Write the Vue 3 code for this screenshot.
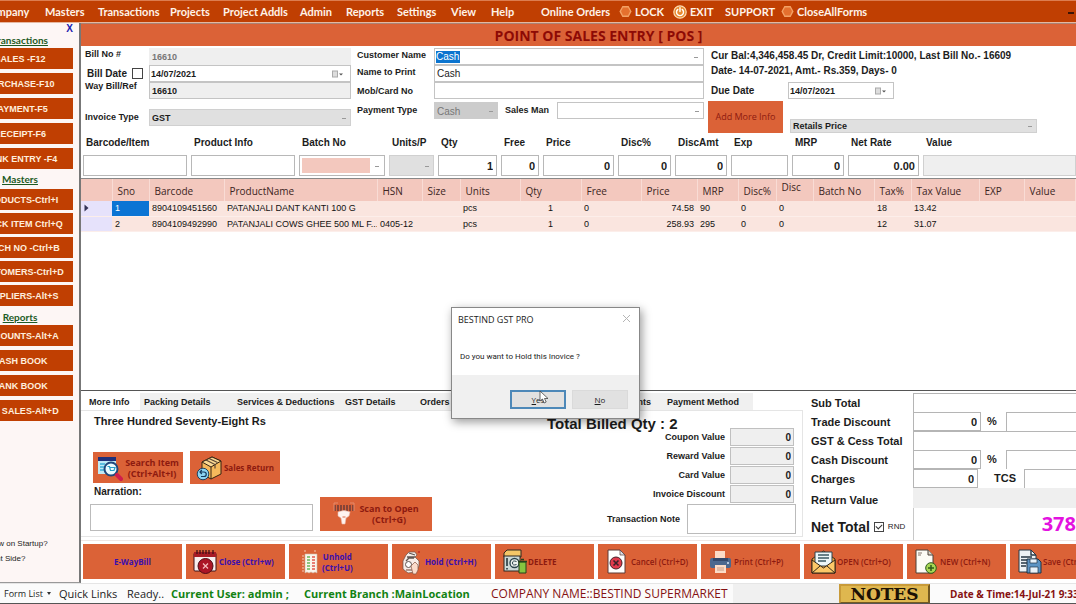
<script setup>
import { ref } from 'vue'

const menu = [
  { label: 'Company', w: 62 },
  { label: 'Masters', w: 53 },
  { label: 'Transactions', w: 72 },
  { label: 'Projects', w: 53 },
  { label: 'Project Addls', w: 77 },
  { label: 'Admin', w: 46 },
  { label: 'Reports', w: 51 },
  { label: 'Settings', w: 54 },
  { label: 'View', w: 40 },
  { label: 'Help', w: 50 },
  { label: 'Online Orders', w: 78 },
  { label: 'LOCK', w: 54, icon: 'hex' },
  { label: 'EXIT', w: 52, icon: 'power' },
  { label: 'SUPPORT', w: 56 },
  { label: 'CloseAllForms', w: 100, icon: 'hex' },
]

const sideGroups = [
  { key: 'tx', title: 'Transactions', items: ['SALES -F12', 'PURCHASE-F10', 'PAYMENT-F5', 'RECEIPT-F6', 'BANK ENTRY -F4'] },
  { key: 'ms', title: 'Masters', items: ['PRODUCTS-Ctrl+I', 'STOCK ITEM Ctrl+Q', 'BATCH NO -Ctrl+B', 'CUSTOMERS-Ctrl+D', 'SUPPLIERS-Alt+S'] },
  { key: 'rp', title: 'Reports', items: ['ACCOUNTS-Alt+A', 'CASH BOOK', 'BANK BOOK', 'DAY SALES-Alt+D'] },
]

const entry = [
  { label: 'Barcode/Item', value: '' },
  { label: 'Product Info', value: '' },
  { label: 'Batch No', kind: 'batch' },
  { label: 'Units/P', kind: 'select' },
  { label: 'Qty', value: '1' },
  { label: 'Free', value: '0' },
  { label: 'Price', value: '0' },
  { label: 'Disc%', value: '0' },
  { label: 'DiscAmt', value: '0' },
  { label: 'Exp', value: '' },
  { label: 'MRP', value: '0' },
  { label: 'Net Rate', value: '0.00' },
  { label: 'Value', value: '', kind: 'readonly' },
]

const columns = [
  { label: '', key: 'mark', w: 31 },
  { label: 'Sno', key: 'sno', w: 37 },
  { label: 'Barcode', key: 'barcode', w: 75 },
  { label: 'ProductName', key: 'name', w: 153 },
  { label: 'HSN', key: 'hsn', w: 45 },
  { label: 'Size', key: 'size', w: 38 },
  { label: 'Units', key: 'units', w: 60 },
  { label: 'Qty', key: 'qty', w: 61 },
  { label: 'Free', key: 'free', w: 60 },
  { label: 'Price', key: 'price', w: 56 },
  { label: 'MRP', key: 'mrp', w: 41 },
  { label: 'Disc%', key: 'disc', w: 38 },
  { label: 'Disc', key: 'discAmt', w: 37 },
  { label: 'Batch No', key: 'batch', w: 61 },
  { label: 'Tax%', key: 'tax', w: 37 },
  { label: 'Tax Value', key: 'taxValue', w: 68 },
  { label: 'EXP', key: 'exp', w: 45 },
  { label: 'Value', key: 'value' },
]
const rows = [
  { sno: '1', barcode: '8904109451560', name: 'PATANJALI DANT KANTI 100 G', units: 'pcs', qty: '1', free: '0', price: '74.58', mrp: '90', disc: '0', discAmt: '0', tax: '18', taxValue: '13.42' },
  { sno: '2', barcode: '8904109492990', name: 'PATANJALI COWS GHEE 500 ML F...', hsn: '0405-12', units: 'pcs', qty: '1', free: '0', price: '258.93', mrp: '295', disc: '0', discAmt: '0', tax: '12', taxValue: '31.07' },
]

const tabs = ['More Info', 'Packing Details', 'Services & Deductions', 'GST Details', 'Orders', 'Attachments', 'Payment Method']
const extras = ['Coupon Value', 'Reward Value', 'Card Value', 'Invoice Discount']

const actions = [
  { label: 'E-WayBill', blue: true },
  { label: 'Close (Ctrl+w)', blue: true, icon: 'close' },
  { label: 'Unhold\n(Ctrl+U)', blue: true, icon: 'unhold' },
  { label: 'Hold (Ctrl+H)', blue: true, icon: 'hold' },
  { label: 'DELETE', icon: 'delete' },
  { label: 'Cancel (Ctrl+D)', icon: 'cancel', light: true },
  { label: 'Print (Ctrl+P)', icon: 'print', light: true },
  { label: 'OPEN (Ctrl+O)', icon: 'open', light: true },
  { label: 'NEW (Ctrl+N)', icon: 'new', light: true },
  { label: 'Save (Ctrl+S)', icon: 'save', light: true },
]
const rounded = ref(true)
</script>

<template>
  <div class="app">
    <nav class="menu">
      <button v-for="m in menu" :key="m.label" class="menu-item" :style="{ width: m.w + 'px' }">
        <svg v-if="m.icon === 'hex'" width="13" height="13" viewBox="0 0 13 13">
          <path d="M3.400 1h6.200l3 5.500-3 5.500H3.400l-3-5.500z" fill="#f3a266" />
          <path d="M4 2.500h5l2 3.800-2 4.200H4L2 6.300z" fill="#e5702e" />
        </svg>
        <svg v-if="m.icon === 'power'" width="14" height="14" viewBox="0 0 14 14">
          <circle cx="7" cy="7" r="6.200" fill="#e8892f" stroke="#fbdcb4" stroke-width="1.200" />
          <path d="M4.800 4.400a3.500 3.500 0 1 0 4.400 0M7 2.600v4" fill="none" stroke="#fff" stroke-width="1.400" stroke-linecap="round" />
        </svg>
        <span>{{ m.label }}</span>
      </button>
      <span class="minimize"></span>
    </nav>

    <div class="body">
      <aside class="side">
        <button class="side-close" aria-label="Close panel">X</button>
        <section v-for="g in sideGroups" :key="g.key" class="side-group" :class="g.key">
          <a href="#" class="side-title">{{ g.title }}</a>
          <button v-for="i in g.items" :key="i" class="side-btn">{{ i }}</button>
        </section>
        <div class="side-notes">
          <span>Show on Startup?</span>
          <span>Right Side?</span>
        </div>
      </aside>

      <main class="main">
        <h1 class="title">POINT OF SALES ENTRY [ POS ]</h1>

        <div class="head">
          <div class="col-a">
            <label for="billno" class="high">Bill No #</label>
            <input id="billno" class="field dim" value="16610" readonly />
            <span class="date-label"><label for="billdate">Bill Date</label><input type="checkbox" class="box" aria-label="Use bill date" /></span>
            <div class="field combo">
              <input id="billdate" value="14/07/2021" />
              <svg class="cal" width="12" height="8" viewBox="0 0 12 8"><rect x=".5" y="1" width="5" height="6" fill="#ddd" stroke="#aaa" /><path d="M7 3.500h4L9 5.500z" fill="#555" /></svg>
            </div>
            <label for="waybill" class="up">Way Bill/Ref</label>
            <input id="waybill" class="field grey" value="16610" />
            <label for="invtype" class="inv">Invoice Type</label>
            <span class="sel inv"><select id="invtype" class="shade"><option>GST</option></select></span>
          </div>

          <div class="col-b">
            <label for="cust" class="high">Customer Name</label>
            <div class="field combo drop"><input id="cust" class="picked" value="Cash" /></div>
            <label for="pname" class="high">Name to Print</label>
            <input id="pname" class="field plain" value="Cash" />
            <label for="mob">Mob/Card No</label>
            <input id="mob" class="field plain" />
            <label for="ptype" class="pay">Payment Type</label>
            <div class="pay payrow">
              <span class="sel short"><select id="ptype" class="disabled"><option>Cash</option></select></span>
              <label for="sman">Sales Man</label>
              <span class="sel grow"><select id="sman"><option></option></select></span>
            </div>
          </div>

          <div class="col-c">
            <p>Cur Bal:4,346,458.45 Dr, Credit Limit:10000, Last Bill No.- 16609</p>
            <p>Date- 14-07-2021, Amt.- Rs.359, Days- 0</p>
            <div class="due">
              <label for="due">Due Date</label>
              <div class="field combo">
                <input id="due" value="14/07/2021" />
                <svg class="cal" width="12" height="8" viewBox="0 0 12 8"><rect x=".5" y="1" width="5" height="6" fill="#ddd" stroke="#aaa" /><path d="M7 3.500h4L9 5.500z" fill="#555" /></svg>
              </div>
            </div>
            <div class="more">
              <button class="orange more-btn">Add More Info</button>
              <span class="sel rate"><select class="shade" aria-label="Price list"><option>Retails Price</option></select></span>
            </div>
          </div>
        </div>

        <div class="entry">
          <label v-for="e in entry" :key="e.label" class="entry-cell">
            <span>{{ e.label }}</span>
            <span v-if="e.kind === 'batch'" class="batch drop"><input class="pink" /></span>
            <span v-else-if="e.kind === 'select'" class="sel"><select class="shade"><option></option></select></span>
            <input v-else class="num" :class="{ grey: e.kind === 'readonly' }" :value="e.value" />
          </label>
        </div>

        <div class="grid">
          <table>
            <colgroup>
              <col v-for="c in columns" :key="c.key" :style="c.w ? { width: c.w + 'px' } : {}" />
            </colgroup>
            <thead>
              <tr><th v-for="c in columns" :key="c.key" :class="'h-' + c.key">{{ c.label }}</th></tr>
            </thead>
            <tbody>
              <tr v-for="(r, n) in rows" :key="r.sno">
                <td v-for="c in columns" :key="c.key" :class="['c-' + c.key, { current: n === 0 && c.key === 'sno' }]">
                  <svg v-if="c.key === 'mark' && n === 0" width="5" height="8" viewBox="0 0 5 8"><path d="M.5.5v7L4.500 4z" fill="#335" /></svg>
                  <template v-else>{{ r[c.key] }}</template>
                </td>
              </tr>
            </tbody>
          </table>
        </div>

        <div class="lower">
          <div class="info">
            <div class="tabs" role="tablist">
              <button v-for="(t, n) in tabs" :key="t" role="tab" class="tab" :class="{ on: n === 0, right: n === 5 }">{{ t }}</button>
            </div>
            <div class="panel">
              <div class="left">
                <p class="words">Three Hundred Seventy-Eight Rs</p>
                <div class="pair">
                  <button class="orange tool">
                    <svg width="26" height="26" viewBox="0 0 26 26">
                      <rect x="1" y="2" width="18" height="17" fill="#bfe9f5" /><rect x="1" y="2" width="18" height="4" fill="#20307a" />
                      <path d="M3 9h5M3 12h4M3 15h5" stroke="#3daed8" stroke-width="1.500" />
                      <circle cx="14" cy="14" r="6.500" fill="#e9fbff" stroke="#20487c" stroke-width="2" />
                      <path d="M10.500 11.500h2l1 4h3.500l1-3h-5" fill="none" stroke="#2c9ec6" stroke-width="1.200" />
                      <path d="M20 20l4 4" stroke="#cf1d4c" stroke-width="4" stroke-linecap="round" />
                    </svg>
                    <span>Search Item<br />(Ctrl+Alt+I)</span>
                  </button>
                  <button class="orange tool tall">
                    <svg width="26" height="26" viewBox="0 0 26 26">
                      <path d="M6 7l10-5 9 4v13l-10 5-9-5z" fill="#f5b95c" stroke="#352313" stroke-linejoin="round" />
                      <path d="M6 7l9 5 10-6-9-4z" fill="#fbd993" stroke="#352313" stroke-linejoin="round" />
                      <path d="M15 12v12" stroke="#352313" fill="none" />
                      <path d="M10 5l9 4.500v4M13 3.500l8.500 4" stroke="#5a4634" stroke-width="1.200" fill="none" />
                      <circle cx="7" cy="19" r="5.800" fill="#8cd4f3" stroke="#22435f" />
                      <path d="M5 21.500h3a2 2 0 0 0 0-4.500H4m1.800-2L4 17l1.800 2" fill="none" stroke="#153b5e" stroke-width="1.200" />
                    </svg>
                    <span>Sales Return</span>
                  </button>
                </div>
                <div class="scanrow">
                  <div class="narr">
                    <label for="narr">Narration:</label>
                    <textarea id="narr"></textarea>
                  </div>
                  <button class="orange tool scan">
                    <svg width="22" height="24" viewBox="0 0 22 24">
                      <path d="M2 3v6M5 3v6M8 3v6M11 3v6M14 3v6M17 3v6M20 3v6" stroke="#7d4238" stroke-width="1.800" />
                      <path d="M1 9V1h4M21 9V1h-4" fill="none" stroke="#e78a6a" />
                      <path d="M5 10q6-3 12 0l-1 4-3 2-1 6H9l-1-6-3-2z" fill="#fff3f0" stroke="#e9bcb0" stroke-width=".6" />
                      <path d="M9.500 15h3" stroke="#d86a4a" />
                    </svg>
                    <span>Scan to Open<br />(Ctrl+G)</span>
                  </button>
                </div>
              </div>
              <div class="right-side">
                <p class="billed">Total Billed Qty : 2</p>
                <div class="extras">
                  <label v-for="x in extras" :key="x"><span>{{ x }}</span><input class="extra" value="0" /></label>
                </div>
                <label class="note"><span>Transaction Note</span><textarea></textarea></label>
              </div>
            </div>
          </div>

          <div class="totals">
            <label for="sub">Sub Total</label>
            <div class="tf"><input id="sub" class="grow" /></div>
            <label for="trade">Trade Discount</label>
            <div class="tf"><input id="trade" class="pct" value="0" /><span class="unit">%</span><input class="grow" aria-label="Trade discount amount" /></div>
            <label for="gst">GST &amp; Cess Total</label>
            <div class="tf"><input id="gst" class="grow" /></div>
            <label for="cash">Cash Discount</label>
            <div class="tf"><input id="cash" class="pct" value="0" /><span class="unit">%</span><input class="grow" aria-label="Cash discount amount" /></div>
            <label for="charges">Charges</label>
            <div class="tf"><input id="charges" class="chg" value="0" /><span class="unit tcs">TCS</span><input class="grow" aria-label="TCS" /></div>
            <label for="ret" class="ret-label">Return Value</label>
            <div class="tf"><input id="ret" class="grow ret" /></div>
            <div class="net">
              <span>Net Total</span>
              <label class="rnd"><input v-model="rounded" type="checkbox" class="tick" />RND</label>
            </div>
            <output class="netval">378</output>
          </div>
        </div>

        <div class="actions">
          <button v-for="a in actions" :key="a.label" class="orange action" :class="{ blue: a.blue, mid: !a.icon, light: a.light }">
            <svg v-if="a.icon" width="25" height="26" viewBox="0 0 25 26">
              <g v-if="a.icon === 'close'">
                <rect x="1" y="4" width="22" height="18" rx="1" fill="#f8eeee" stroke="#3f1016" /><rect x="1" y="3" width="22" height="5" fill="#a81b26" />
                <path d="M4 1v4M7 1v4M10 1v4M13 1v4M16 1v4M20 1v4" stroke="#3f1016" stroke-width="1.300" />
                <circle cx="12.500" cy="17" r="7.500" fill="#ab1526" stroke="#4f0b15" /><path d="M10 14.500l5 5M15 14.500l-5 5" stroke="#f4b9bb" stroke-width="1.300" />
              </g>
              <g v-else-if="a.icon === 'unhold'">
                <path d="M9 5h12v19l-2-1-2 1-2-1-2 1-2-1-2 1z" fill="#fbf4ec" stroke="#cfb9a8" stroke-width=".6" />
                <path d="M11 8h3M11 11h3M11 14h3M11 17h3M11 20h3" stroke="#68b75c" stroke-width="1.400" /><path d="M16 8h3M16 11h3M16 14h3M16 17h3M16 20h3" stroke="#e2564d" stroke-width="1.400" />
                <path d="M7 6v17M8 2h3M18 2h3" stroke="#f4c9b4" stroke-dasharray="2 1" />
              </g>
              <g v-else-if="a.icon === 'hold'">
                <path d="M7 6l3-3h6l2 3-2 2 4 4v5l-3 6-8 1-5-4V12z" fill="#f8ede8" stroke="#6b5148" stroke-width=".7" />
                <path d="M10 4l6 2M8 8h8M7 12l3-3h5" fill="none" stroke="#5f5552" stroke-width="1.300" />
                <circle cx="9.500" cy="15.500" r="3" fill="#fff" stroke="#5f5552" /><path d="M7 21h6" stroke="#8b665b" stroke-width="1.300" />
                <path d="M12 17l4-4 3 3v5l-2 4h-3z" fill="#fbdccb" stroke="#88543f" stroke-width=".7" /><circle cx="20" cy="3" r="1" fill="#c52d2a" />
              </g>
              <g v-else-if="a.icon === 'delete'">
                <path d="M2 4l3-3h14v7H2z" fill="#f4c667" stroke="#2c2620" /><rect x="2" y="7" width="16" height="15" fill="#cbd8d6" stroke="#2c2620" />
                <path d="M5 9v8M5 19v1.500" stroke="#25363d" stroke-width="1.600" /><circle cx="12.500" cy="14" r="4.500" fill="#eef3ef" stroke="#29434b" stroke-width="1.300" />
                <path d="M14.500 12.500q-4-1.500-4 1.500t4 1.500" fill="none" stroke="#29434b" /><path d="M17 13h7v11h-7z" fill="#86c440" stroke="#24421b" /><path d="M16 12.500h9M19 10.500h3" stroke="#24421b" stroke-width="1.300" />
              </g>
              <g v-else-if="a.icon === 'cancel'">
                <path d="M3 1h12l5 5v18H3z" fill="#fff" stroke="#5c3a36" /><path d="M15 1v5h5z" fill="#dbe0e8" stroke="#5c3a36" stroke-width=".7" />
                <circle cx="11" cy="14" r="6" fill="#e03a4d" stroke="#472027" /><path d="M8.500 11.500l5 5M13.500 11.500l-5 5" stroke="#392029" stroke-width="1.600" />
              </g>
              <g v-else-if="a.icon === 'print'">
                <path d="M7 2h10v9H7z" fill="#fcdac6" /><rect x="2" y="9" width="21" height="10" rx="2" fill="#4b688f" /><path d="M5 9h15v3H5z" fill="#33486b" />
                <path d="M7 16h11v8H7z" fill="#fbdcc8" /><path d="M9 19h7M9 21h7" stroke="#c99b83" /><circle cx="20" cy="14" r="1" fill="#d7e5f4" />
              </g>
              <g v-else-if="a.icon === 'open'">
                <path d="M1 10l11.500-8L24 10v14H1z" fill="#f2a63c" stroke="#332619" /><path d="M4 3h17v14H4z" fill="#edf6f8" stroke="#30424a" />
                <path d="M7 6h11M7 9h11M7 12h8" stroke="#3d5963" stroke-width="1.300" /><path d="M1 11l11.500 8L24 11v13H1z" fill="#fcc768" stroke="#332619" /><path d="M1 24l8-7M24 24l-8-7" stroke="#332619" />
              </g>
              <g v-else-if="a.icon === 'new'">
                <path d="M2 1h12l5 5v18H2z" fill="#fdfbf6" stroke="#4c4039" /><path d="M14 1v5h5" fill="#ddd5c9" stroke="#4c4039" /><path d="M4 4h4M4 6h3" stroke="#84776e" />
                <circle cx="17" cy="19" r="5.300" fill="#a8d655" stroke="#2d5c1a" /><path d="M17 16v6M14 19h6" stroke="#2d5c1a" stroke-width="1.500" />
              </g>
              <g v-else>
                <path d="M2 1h12l5 5v17H2z" fill="#edf2f5" stroke="#263744" /><path d="M14 1v5h5M4 8h11M4 11h8M4 14h6M4 17h5" fill="none" stroke="#263744" stroke-width="1.400" />
                <path d="M10 10h11l3 3v11H10z" fill="#5d94c4" stroke="#1f3547" /><path d="M13 10h7v4h-7zM13 18h8v6h-8z" fill="#e9f2fa" stroke="#1f3547" stroke-width=".7" />
              </g>
            </svg>
            <span>{{ a.label }}</span>
          </button>
        </div>
      </main>
    </div>

    <footer class="status">
      <button class="formlist">Form List <i></i></button>
      <span class="q">Quick Links</span>
      <span class="ready">Ready..</span>
      <b class="user">Current User: admin ;</b>
      <b class="branch">Current Branch :MainLocation</b>
      <span class="company">COMPANY NAME::BESTIND SUPERMARKET</span>
      <span class="filler"></span>
      <button class="notes">NOTES</button>
      <b class="clock">Date &amp; Time:14-Jul-21 9:33</b>
    </footer>

    <div class="dialog" role="dialog" aria-labelledby="dlg">
      <header>
        <span id="dlg">BESTIND GST PRO</span>
        <button aria-label="Close"><svg width="9" height="9" viewBox="0 0 9 9"><path d="M1 1l7 7M8 1L1 8" stroke="#b5b5b5" /></svg></button>
      </header>
      <p>Do you want to Hold this Inovice ?</p>
      <div class="dlg-foot">
        <button class="yes"><u>Y</u>es</button>
        <button><u>N</u>o</button>
      </div>
      <svg class="cursor" width="10" height="14" viewBox="0 0 10 14"><path d="M1 1v10l2.500-2 1.700 4 2-1-1.700-3.500H9z" fill="#fff" stroke="#444" stroke-width=".8" /></svg>
    </div>
  </div>
</template>

<style>
body { overflow: hidden; }
</style>

<style scoped>
* { box-sizing: border-box; }
.app {
  position: relative;
  display: flex;
  flex-direction: column;
  height: 100vh;
  overflow: hidden;
  background: #fff;
  color: #1c1c1c;
  font: bold 9px/12px "Liberation Sans", Arial, sans-serif;
}
button, input, select, textarea { font: inherit; color: inherit; margin: 0; border-radius: 0; min-width: 0; }
button { border: 0; padding: 0; background: none; white-space: nowrap; }
textarea { display: block; resize: none; border: 1px solid #bbb; background: #fff; }
p, h1 { margin: 0; }

.menu {
  display: flex;
  flex: none;
  height: 23px;
  margin-left: -17px;
  border-top: 1px solid #dc7d50;
  border-bottom: 1px solid #e6b7a0;
  background: #c03f02;
}
.menu-item {
  display: flex;
  flex: none;
  align-items: center;
  gap: 3px;
  color: #fff3e8;
  font: bold 11px/14px Lato, "Open Sans", sans-serif;
}
.minimize { width: 6px; height: 2px; margin: 11px 2px 0 auto; background: #3c1406; }

.body { display: flex; flex: 1; min-height: 0; }
.side {
  display: flex;
  flex: none;
  flex-direction: column;
  width: 114px;
  margin-left: -33px;
  padding-right: 6px;
  border-right: 2px solid #777;
  border-bottom: 1px solid #999;
  background: #fdf6f5;
}
.side-close { align-self: flex-end; height: 11px; color: #2020b0; font-size: 10px; line-height: 12px; }
.side-group { display: flex; flex-direction: column; gap: 4px; }
.side-group.ms { gap: 3px; }
.side-title {
  height: 10px;
  color: #1c5a24;
  font: bold 10px/12px Lato, "Open Sans", sans-serif;
  text-align: center;
}
.ms .side-title { height: 17px; line-height: 20px; }
.rp .side-title { height: 15px; line-height: 22px; }
.side-btn { height: 21px; background: #c03f02; color: #ffeedd; }
.side-notes { display: flex; flex-direction: column; gap: 3px; margin-top: auto; padding: 0 0 17px 17px; font: normal 8px/12px "Liberation Sans", Arial, sans-serif; white-space: nowrap; }

.main { display: flex; flex: 1; flex-direction: column; min-width: 0; overflow: hidden; }
.title {
  flex: none;
  height: 23px;
  padding-left: 40px;
  border-top: 1px solid #a98274;
  background: #db6237;
  color: #8d0a05;
  font: bold 14px/23px "Open Sans", "Noto Sans", sans-serif;
  text-align: center;
}

.head { display: flex; flex: none; padding: 2px 0 0 4px; }
.field { height: 17px; border: 1px solid #c4c4c4; padding: 0 2px; background: #fff; }
.field.dim { border-color: #efefef; background: #efefef; color: #777; }
.grey { background: #efefef; }
.field.plain { font-weight: normal; font-size: 10px; }
.combo { display: flex; align-items: center; padding: 0 6px 0 1px; }
.combo input { flex: 1; width: 20px; border: 0; padding: 0; background: none; outline: 0; }
.combo .picked { flex: none; width: 24px; background: #0b74cf; color: #fff; font-weight: normal; font-size: 10px; }
.sel, .drop { position: relative; display: flex; }
.sel::after, .drop::after {
  content: "";
  position: absolute;
  right: 5px;
  top: 50%;
  width: 4px;
  height: 1px;
  background: #999;
}
select { width: 100%; height: 17px; padding: 0 2px; border: 1px solid #c4c4c4; background: #fff; appearance: none; }
select.shade { border-color: #d0d0d0; background: #e0e0e0; font-size: 9px; }
select.disabled { border-color: #ccc; background: #ccc; color: #777; font-weight: normal; font-size: 10px; }

.high { align-self: start; line-height: 15px; }
.col-a { display: grid; grid-template-columns: 64px 202px; grid-template-rows: 17px 17px 17px 27px; align-items: center; margin-right: 6px; align-self: start; }
.col-a .high { line-height: 12px; }
.col-a .up { align-self: start; line-height: 9px; }
.inv { align-self: end; }
label.inv { line-height: 17px; }
.date-label { display: flex; align-items: center; gap: 5px; padding-left: 2px; font-size: 10px; white-space: nowrap; }
.box, .tick { flex: none; appearance: none; width: 11px; height: 11px; border: 1px solid #444; background: #fff; }
.col-b { display: grid; grid-template-columns: 77px 270px; grid-template-rows: 17px 17px 17px 20px; align-items: center; margin-right: 7px; align-self: start; white-space: nowrap; }
.col-b .high { line-height: 14px; }
.pay { align-self: end; line-height: 17px; }
.payrow { display: flex; }
.short { width: 64px; margin-right: 7px; }
.payrow label { width: 52px; }
.grow { flex: 1; }
.col-c { flex: 1; min-width: 0; font-size: 10px; white-space: nowrap; }
.col-c p { line-height: 15px; }
.due { display: grid; grid-template-columns: 77px 106px; align-items: center; margin-top: 4px; }
.due .combo { font-size: 9px; }
.more { display: flex; align-items: flex-end; gap: 7px; margin: 2px 0 0 -3px; }
.orange { background: #db6237; color: #8d1a10; font: bold 9px/12px "Open Sans", "Noto Sans", sans-serif; }
.more-btn { width: 75px; height: 32px; font-weight: normal; }
.rate { width: 247px; }
.rate select { height: 14px; }

.entry {
  display: grid;
  flex: none;
  grid-template-columns: 104px 104px 86px 45px 59px 38px 71px 53px 52px 57px 52px 71px 1fr;
  gap: 4px;
  padding: 3px 0 2px 2px;
}
.entry-cell { display: flex; flex-direction: column; gap: 6px; min-width: 0; font-size: 10px; line-height: 13px; white-space: nowrap; }
.entry-cell > span:first-child { padding-left: 3px; }
.entry .num, .batch, .entry select { width: 100%; height: 21px; border: 1px solid #b8b8b8; }
.entry .grey, .entry select { border-color: #d0d0d0; }
.num { padding: 0 3px; font-size: 11px; text-align: right; }
.batch { padding: 2px; }
.batch .pink { width: 68px; border: 0; background: #f3c8be; }

.grid { flex: 1; min-height: 0; border-top: 1px solid #888; border-bottom: 1px solid #555; }
table { width: 100%; table-layout: fixed; border-collapse: collapse; }
th { height: 22px; padding: 2px 0 0 5px; border-right: 1px solid #f9dcd5; background: #f3c8be; color: #3c2522; font: normal 10px/13px "Open Sans", "Noto Sans", sans-serif; text-align: left; white-space: nowrap; }
th.h-discAmt { padding-bottom: 5px; padding-top: 0; }
td { height: 15px; padding: 0 3px; border-bottom: 1px solid #fceeea; background: #fae5df; color: #111; font: normal 9px/14px "Liberation Sans", Arial, sans-serif; white-space: nowrap; overflow: hidden; }
td.c-mark { background: #e6e2fb; line-height: 0; }
td.current { background: #0b74d4; color: #fff; }
td.c-qty { text-align: center; }
td.c-price { text-align: right; }

.lower { display: flex; flex: none; }
.info { flex: none; width: 722px; padding-top: 2px; }
.tabs { display: grid; grid-template-columns: 58px 85px 116px 71px 60px 185px 96px; padding-left: 1px; }
.tab { height: 17px; padding-left: 4px; background: #f0f0f0; text-align: left; }
.tab.on { padding-left: 7px; background: #fff; }
.tab.right { padding: 0 6px; text-align: right; }
.tab:nth-child(3) { padding-left: 12px; }
.tab:nth-child(5) { padding-left: 8px; }
.tab:last-child { padding-left: 10px; }
.panel { display: flex; justify-content: space-between; height: 127px; border: 1px solid #e5e5e5; border-left: 0; padding: 1px 6px 0 9px; }
.words { margin: 2px 0 0 4px; font-size: 11px; line-height: 14px; }
.pair { display: flex; align-items: center; gap: 7px; margin: 23px 0 0 3px; }
.tool { display: flex; align-items: center; justify-content: center; gap: 2px; width: 90px; height: 31px; line-height: 11px; }
.tool.tall { height: 33px; font-size: 8px; }
.scanrow { display: flex; align-items: flex-end; gap: 7px; }
.narr { display: flex; flex-direction: column; gap: 6px; padding-top: 2px; }
.narr label { padding-left: 4px; font-size: 10px; }
.narr textarea { width: 223px; height: 27px; }
.scan { width: 112px; height: 34px; gap: 4px; }
.right-side { display: flex; flex-direction: column; align-items: flex-end; width: 260px; }
.billed { align-self: flex-start; height: 16px; padding-left: 11px; font-size: 15px; line-height: 24px; white-space: nowrap; }
.extras { display: flex; flex-direction: column; gap: 1px; padding-right: 2px; }
.extras label { display: flex; align-items: center; justify-content: flex-end; gap: 5px; }
.extra { width: 64px; height: 18px; border: 1px solid #c0c0c0; padding: 0 2px; background: #efefef; font-size: 10px; text-align: right; }
.note { display: flex; align-items: center; gap: 7px; margin-top: 1px; }
.note textarea { width: 109px; height: 30px; }

.totals { display: grid; flex: 1; grid-template-columns: 102px 1fr; grid-template-rows: repeat(5, 19px) 20px 32px; align-items: center; min-width: 0; padding: 2px 0 0 8px; font-size: 11px; white-space: nowrap; }
.ret-label { padding-top: 4px; }
.tf { display: flex; align-self: stretch; min-width: 0; }
.tf input { min-width: 0; border: 0; border-top: 1px solid #b5b5b5; border-left: 1px solid #b5b5b5; padding: 0 3px; background: #fff; text-align: right; }
.tf .pct { width: 68px; border-right: 1px solid #b5b5b5; border-bottom: 1px solid #b5b5b5; }
.tf .chg { width: 65px; border-right: 1px solid #b5b5b5; border-bottom: 1px solid #b5b5b5; }
.unit { width: 25px; padding-right: 3px; line-height: 19px; text-align: center; }
.tcs { width: 46px; padding: 0 0 0 8px; }
.tf .ret { border: 0; background: #efefef; }
.net { display: flex; align-items: center; gap: 4px; padding-top: 6px; font-size: 14px; }
.rnd { display: flex; align-items: center; gap: 4px; font-weight: normal; font-size: 8px; }
.tick { width: 10px; height: 10px; }
.tick:checked::before { content: ""; display: block; width: 5px; height: 3px; margin: 1px; border: solid #333; border-width: 0 0 1px 1px; transform: rotate(-45deg); }
.netval { align-self: stretch; border-left: 1px solid #c8c8c8; color: #e312e0; font: bold 20px/32px "Open Sans", "Noto Sans", sans-serif; text-align: right; }

.actions { display: flex; flex: none; gap: 4px; padding: 3px 0 4px 2px; border-top: 1px solid #eee6e4; }
.action { display: flex; flex: none; align-items: center; gap: 1px; width: 99px; height: 35px; padding-left: 7px; font-size: 8px; line-height: 11px; }
.action span { white-space: pre; }
.action.light { font-weight: 600; }
.action.blue { color: #3a0fae; }
.action.mid { justify-content: center; padding: 0; }

.status {
  display: flex;
  flex: none;
  align-items: center;
  height: 21px;
  border-top: 1px solid #e5e5e5;
  border-bottom: 1px solid #555;
  background: #fbfbfb;
  font: normal 11px/18px "Open Sans", "Noto Sans", sans-serif;
  white-space: nowrap;
  overflow: hidden;
}
.formlist { display: flex; align-items: center; gap: 4px; width: 59px; padding-left: 4px; font-size: 9px; flex: none; }
.formlist i { border: 2px solid transparent; border-top: 3px solid #333; border-bottom: 0; }
.q { width: 68px; }
.ready { width: 44px; }
.user { width: 133px; color: #128212; }
.branch { width: 187px; color: #128212; }
.company { padding-right: 5px; color: #861212; font-size: 12px; }
.filler { flex: 1; align-self: stretch; background: #f0f0f0; }
.notes { width: 91px; height: 20px; border: 2px outset #c99b3a; background: #dfb74f; color: #1c1205; font: bold 17px/16px "DejaVu Serif", serif; }
.clock { width: 146px; padding-left: 20px; color: #861212; font-size: 10px; }

.dialog {
  position: absolute;
  left: 451px;
  top: 307px;
  width: 189px;
  border: 1px solid #888;
  background: #fff;
  box-shadow: 2px 3px 9px rgba(0, 0, 0, 0.4);
  font: normal 9px/12px "Open Sans", "Noto Sans", sans-serif;
}
.dialog header { display: flex; justify-content: space-between; height: 22px; padding: 1px 8px 0 6px; line-height: 22px; }
.dialog p { padding: 21px 8px 12px; font-family: Roboto, sans-serif; font-size: 8px; }
.dlg-foot { display: flex; justify-content: flex-end; gap: 6px; height: 43px; padding: 15px 11px 9px; background: #f0f0f0; }
.dlg-foot button { width: 56px; background: #e1e1e1; border: 1px solid #dadada; font-size: 8px; }
.dlg-foot .yes { border: 2px solid #4d88b8; }
.cursor { position: absolute; left: 87px; top: 82px; }
</style>
